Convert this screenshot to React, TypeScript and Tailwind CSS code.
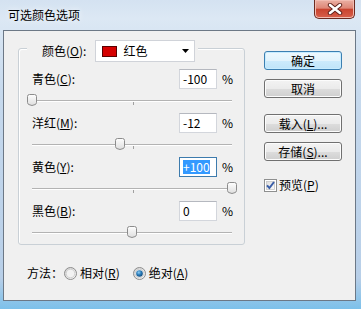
import React from "react";

function Thumb() {
  return (
    <svg width="10" height="12" viewBox="0 0 10 12">
      <defs>
        <linearGradient id="tg" x1="0" y1="0" x2="0" y2="1">
          <stop offset="0" stopColor="#fefefe" />
          <stop offset="1" stopColor="#dedede" />
        </linearGradient>
      </defs>
      <path d="M0.5 2.5 Q0.5 0.5 2.5 0.5 H7.5 Q9.5 0.5 9.5 2.5 V8.5 Q9.5 10 8 10.6 L5 11.5 L2 10.6 Q0.5 10 0.5 8.5 Z" fill="url(#tg)" stroke="#8c8c8c" />
    </svg>
  );
}

function Slider({ value, h }: { value: number; h: string }) {
  const pos = ((value + 100) / 200) * 200;
  return (
    <div className={`relative ml-[13px] w-[200px] ${h}`}>
      <div className="absolute left-0 right-0 top-[11px] h-[2px] border-t border-t-[#b3b3b3] border-b border-b-white" />
      <div className="absolute left-[101px] top-[13px] h-[3px] w-px bg-[#a0a0a0]" />
      <div className="absolute top-[5px]" style={{ left: pos - 5 }}>
        <Thumb />
      </div>
    </div>
  );
}

function Row({
  name,
  k,
  val,
  focus,
}: {
  name: string;
  k: string;
  val: string;
  focus?: boolean;
}) {
  return (
    <div className="flex h-[20px] items-center pl-[13px] pr-[12px]">
      <span className="leading-[16px]">
        {name}(<span className="underline">{k}</span>):
      </span>
      <div
        className={`ml-auto flex h-[20px] w-[38px] items-center bg-white pl-[3px] ${
          focus ? "border border-[#3d7bad]" : "border border-[#d3d6dc] border-t-[#b5b8bf]"
        }`}
      >
        {focus ? (
          <span className="bg-[#3399ff] leading-[14px] text-white">{val}</span>
        ) : (
          <span className="leading-[14px]">{val}</span>
        )}
      </div>
      <span className="ml-[5px] w-[10px] leading-[16px]">%</span>
    </div>
  );
}

function Btn({ children, def }: { children: React.ReactNode; def?: boolean }) {
  return (
    <div
      className={`flex h-[19px] w-[78px] items-center justify-center rounded-[3px] border leading-[16px] ${
        def
          ? "border-[#3c7fb1] bg-[linear-gradient(#eef8fd_0%,#e2f3fc_50%,#cdebfc_50%,#bfe4f9_100%)] shadow-[inset_0_0_0_1px_#c7ecff]"
          : "border-[#707070] bg-[linear-gradient(#f3f3f3_0%,#ebebeb_50%,#dddddd_50%,#cfcfcf_100%)] shadow-[inset_0_0_0_1px_#fcfcfc]"
      }`}
    >
      {children}
    </div>
  );
}

function Radio({ checked }: { checked?: boolean }) {
  return (
    <svg width="13" height="13" viewBox="0 0 13 13">
      <defs>
        <linearGradient id="rg" x1="0" y1="0" x2="1" y2="1">
          <stop offset="0" stopColor="#d0d0d0" />
          <stop offset="1" stopColor="#fafafa" />
        </linearGradient>
        <radialGradient id="rd" cx="0.4" cy="0.35" r="0.7">
          <stop offset="0" stopColor="#8fd0f7" />
          <stop offset="0.5" stopColor="#2a7bb8" />
          <stop offset="1" stopColor="#124a7a" />
        </radialGradient>
      </defs>
      <circle cx="6.5" cy="6.5" r="6" fill="url(#rg)" stroke="#8d8d8d" />
      <circle cx="6.5" cy="6.5" r="4.3" fill="#f2f2f2" stroke="#c9c9c9" strokeWidth="0.8" />
      {checked && <circle cx="6.5" cy="6.5" r="3.3" fill="url(#rd)" />}
    </svg>
  );
}

export default function App() {
  return (
    <div className="flex h-[309px] w-[361px] flex-col overflow-hidden bg-[linear-gradient(180deg,#d4e2f1_0%,#dce8f4_6%,#c6d9ed_30%,#b8cfe8_90%,#7cc0ea_100%)] font-['Noto_Sans_CJK_SC','Noto_Sans',sans-serif] text-[12px] text-black">
      {/* title bar */}
      <div className="flex h-[30px] shrink-0 items-start justify-between">
        <div className="pl-[8px] pt-[7px] leading-[16px] [text-shadow:0_0_6px_#ffffff]">
          可选颜色选项
        </div>
        <div className="mr-[6px] flex h-[19px] w-[41px] items-center justify-center rounded-b-[5px] border border-t-0 border-[#6b2a20] bg-[linear-gradient(180deg,#eab0a3_0%,#de8777_45%,#c9442f_52%,#d8604b_100%)] shadow-[inset_0_0_0_1px_#f2bdb2]">
          <svg width="16" height="12" viewBox="0 0 16 12">
            <path d="M3 2 L13 10 M13 2 L3 10" stroke="#5c1f18" strokeWidth="4.4" strokeLinecap="round" />
            <path d="M3 2 L13 10 M13 2 L3 10" stroke="#ffffff" strokeWidth="2.6" strokeLinecap="round" />
          </svg>
        </div>
      </div>

      {/* client area */}
      <div className="mb-[8px] ml-[3px] mr-[5px] flex flex-1 border border-[#6c7886] bg-[#f0f0f0] pl-[14px]">
        {/* left column */}
        <div className="flex w-[227px] flex-col">
          <div className="mt-[17px] flex flex-col rounded-[3px] border border-[#c9d0d6] shadow-[inset_1px_1px_0_#ffffff]">
            <div className="-mt-[9px] ml-[8px] flex h-[22px] items-center self-start bg-[#f0f0f0] pl-[15px] pr-[3px]">
              <span className="leading-[16px]">
                颜色(<span className="underline">O</span>):
              </span>
              <div className="ml-[9px] flex h-[22px] w-[100px] items-center border border-[#d0d3d9] bg-white pl-[6px]">
                <div className="h-[11px] w-[15px] border border-[#5a0000] bg-[#d50000]" />
                <span className="ml-[6px] leading-[16px]">红色</span>
                <svg className="ml-auto mr-[5px]" width="7" height="4" viewBox="0 0 7 4">
                  <path d="M0 0 H7 L3.5 4 Z" fill="#000" />
                </svg>
              </div>
            </div>
            <div className="mt-[7px] flex flex-col">
              <Row name="青色" k="C" val="-100" />
              <Slider value={-100} h="h-[24px]" />
              <Row name="洋红" k="M" val="-12" />
              <Slider value={-12} h="h-[24px]" />
              <Row name="黄色" k="Y" val="+100" focus />
              <Slider value={100} h="h-[24px]" />
              <Row name="黑色" k="B" val="0" />
              <Slider value={0} h="h-[23px]" />
            </div>
          </div>
          <div className="ml-[9px] mt-[18px] flex h-[20px] items-center">
            <span className="leading-[16px]">方法：</span>
            <div className="ml-[1px] flex items-center">
              <Radio />
            </div>
            <span className="ml-[3px] leading-[16px]">
              相对(<span className="underline">R</span>)
            </span>
            <div className="ml-[13px] flex items-center">
              <Radio checked />
            </div>
            <span className="ml-[3px] leading-[16px]">
              绝对(<span className="underline">A</span>)
            </span>
          </div>
        </div>

        {/* right column */}
        <div className="ml-[19px] mt-[20px] flex w-[78px] flex-col">
          <Btn def>确定</Btn>
          <div className="mt-[9px]">
            <Btn>取消</Btn>
          </div>
          <div className="mt-[16px]">
            <Btn>
              载入(<span className="underline">L</span>)...
            </Btn>
          </div>
          <div className="mt-[9px]">
            <Btn>
              存储(<span className="underline">S</span>)...
            </Btn>
          </div>
          <div className="mt-[16px] flex h-[16px] items-center">
            <svg width="13" height="13" viewBox="0 0 13 13">
              <defs>
                <linearGradient id="cg" x1="0" y1="0" x2="1" y2="1">
                  <stop offset="0" stopColor="#dcdcdc" />
                  <stop offset="1" stopColor="#fbfbfb" />
                </linearGradient>
              </defs>
              <rect x="0.5" y="0.5" width="12" height="12" fill="#ffffff" stroke="#8e8f8f" />
              <rect x="2.5" y="2.5" width="8" height="8" fill="url(#cg)" stroke="#c6c6c6" strokeWidth="0.8" />
              <path d="M3 6.3 L5.4 9 L10 3" fill="none" stroke="#3a5ea8" strokeWidth="2" />
            </svg>
            <span className="ml-[2px] leading-[16px]">
              预览(<span className="underline">P</span>)
            </span>
          </div>
        </div>
      </div>
    </div>
  );
}
